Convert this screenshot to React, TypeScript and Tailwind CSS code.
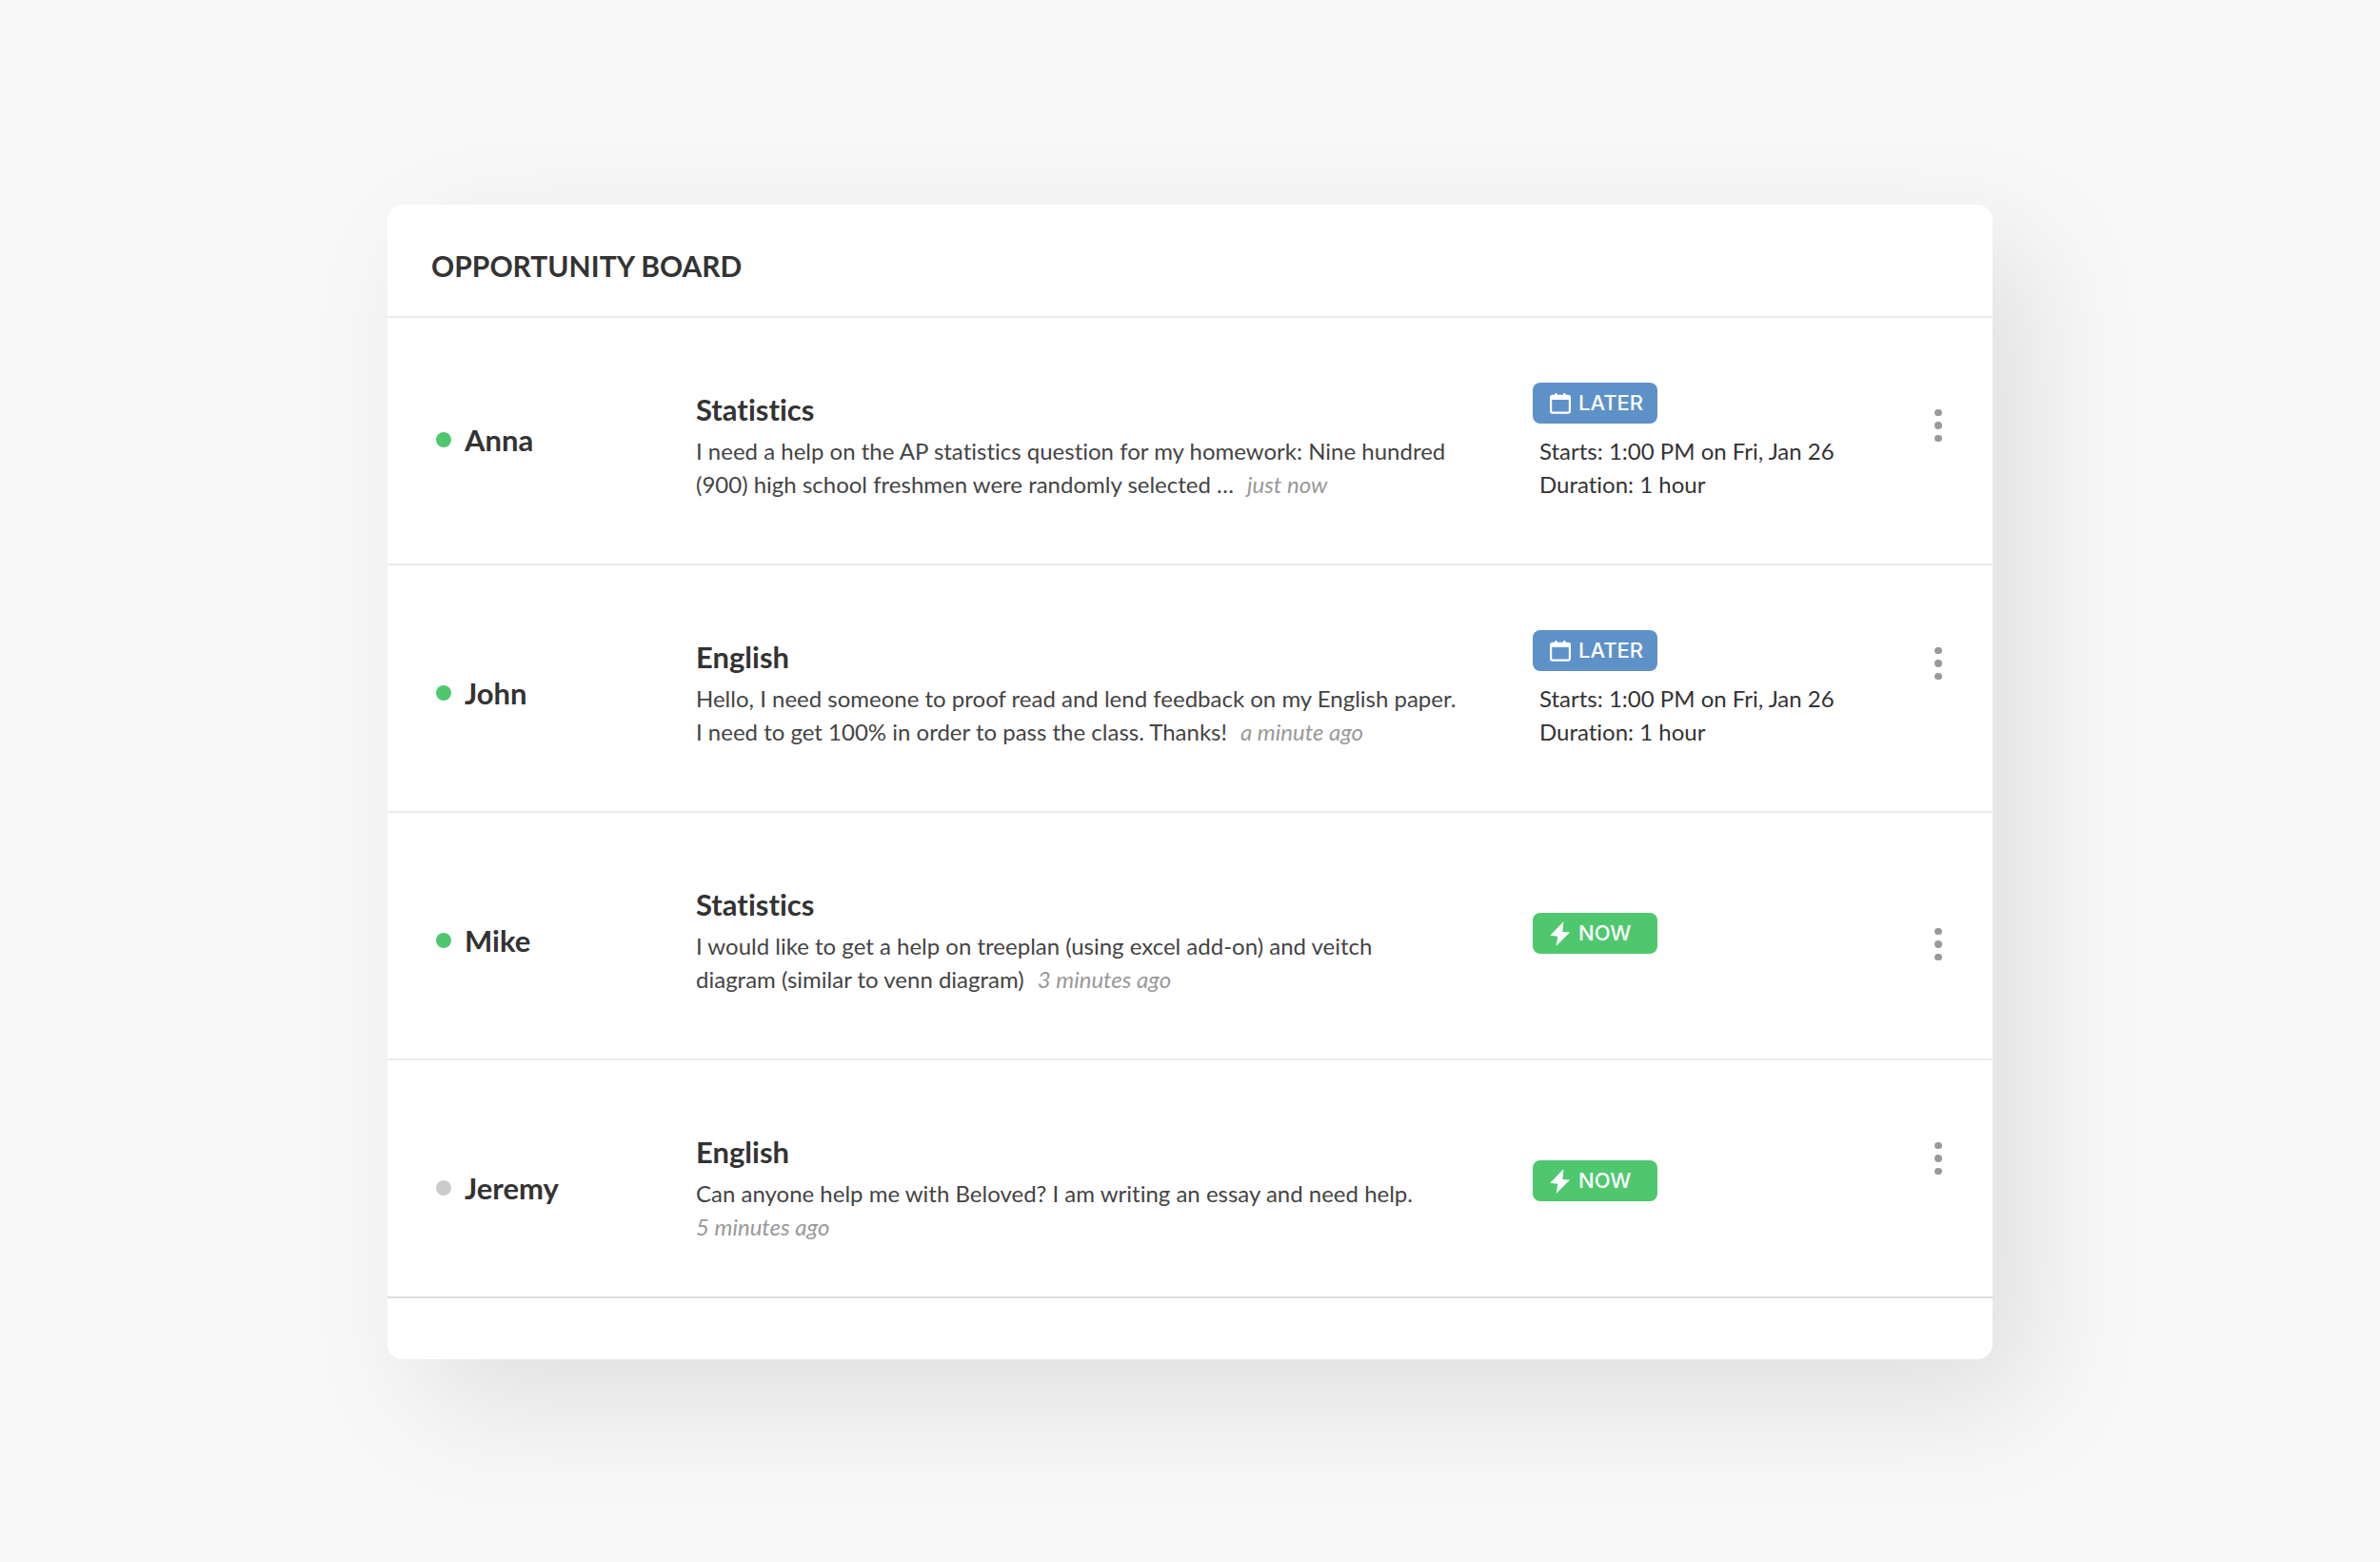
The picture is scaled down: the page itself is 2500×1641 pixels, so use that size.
import { useId } from 'react';
import clsx from 'clsx';

type Opportunity = {
  name: string;
  online: boolean;
  subject: string;
  message: string[];
  posted: string;
  session?: { starts: string; duration: string };
  nameClass: string;
  menuClass: string;
};

const opportunities: Opportunity[] = [
  {
    name: 'Anna',
    online: true,
    subject: 'Statistics',
    message: [
      'I need a help on the AP statistics question for my homework: Nine hundred',
      '(900) high school freshmen were randomly selected …',
    ],
    posted: 'just now',
    session: { starts: '1:00 PM on Fri, Jan 26', duration: '1 hour' },
    nameClass: 'pt-27',
    menuClass: 'pt-24',
  },
  {
    name: 'John',
    online: true,
    subject: 'English',
    message: [
      'Hello, I need someone to proof read and lend feedback on my English paper.',
      'I need to get 100% in order to pass the class. Thanks!',
    ],
    posted: 'a minute ago',
    session: { starts: '1:00 PM on Fri, Jan 26', duration: '1 hour' },
    nameClass: 'pt-[114px]',
    menuClass: 'pt-[86px]',
  },
  {
    name: 'Mike',
    online: true,
    subject: 'Statistics',
    message: [
      'I would like to get a help on treeplan (using excel add-on) and veitch',
      'diagram (similar to venn diagram)',
    ],
    posted: '3 minutes ago',
    nameClass: 'pt-[114px]',
    menuClass: 'pt-[121px]',
  },
  {
    name: 'Jeremy',
    online: false,
    subject: 'English',
    message: ['Can anyone help me with Beloved? I am writing an essay and need help.'],
    posted: '5 minutes ago',
    nameClass: 'pt-[114px]',
    menuClass: 'pt-[86px]',
  },
];

function CalendarIcon() {
  return (
    <svg width="22" height="22" viewBox="0 0 22 22" aria-hidden="true">
      <path
        d="M6.500 0c.8 0 1.300.500 1.300 1.300v.500h6.200v-.500C14 .5 14.500 0 15.300 0s1.300.5 1.300 1.300v.5h2.600A2.800 2.800 0 0 1 22 4.600v14.400a2.800 2.800 0 0 1-2.800 2.800H2.800A2.800 2.800 0 0 1 0 19V4.600a2.800 2.800 0 0 1 2.800-2.800h2.400v-.5C5.200.5 5.700 0 6.500 0zM2.200 7v11.600c0 .6.400 1 1 1h15.600c.6 0 1-.4 1-1V7z"
        fill="currentColor"
        fillRule="evenodd"
      />
    </svg>
  );
}

function BoltIcon() {
  return (
    <svg width="22" height="26" viewBox="0 0 22 26" aria-hidden="true">
      <path d="M14.500 0 .300 14.800l8 .9L6.600 26 21 11.600l-7.700-.700z" fill="currentColor" />
    </svg>
  );
}

function Badge({ later }: { later: boolean }) {
  return (
    <span
      className={clsx(
        'flex h-[43px] w-[131px] items-center gap-2 rounded-lg pl-[18px] font-[Inter,sans-serif] text-[22px] font-medium text-white',
        later ? 'bg-[#5e91c8]' : 'bg-[#4fc76e]'
      )}
    >
      {later ? <CalendarIcon /> : <BoltIcon />}
      {later ? 'LATER' : 'NOW'}
    </span>
  );
}

function Message({ lines, posted }: { lines: string[]; posted: string }) {
  // the timestamp trails the second line, or takes it when the message is short
  const [first, second] = lines;

  return (
    <div className="mt-[6px] text-[24px] leading-[35px] text-[#444]">
      <p>{first}</p>
      <div className="flex gap-[14px]">
        {second && <p>{second}</p>}
        <time className="whitespace-nowrap text-[#999] italic">{posted}</time>
      </div>
    </div>
  );
}

function OpportunityRow({ item }: { item: Opportunity }) {
  return (
    <li className="grid h-65 grid-cols-[273px_minmax(0,1fr)_409px_34px] border-b-2 border-[#ececec] pr-10 pl-[51px] last:h-[250px] last:border-[#dcdcdc]">
      <div className={clsx('flex h-fit items-center gap-[14px]', item.nameClass)}>
        <span
          className={clsx('size-4 rounded-full', item.online ? 'bg-[#4fc76e]' : 'bg-[#cbcbcb]')}
        />
        <h2 className="text-[31px] leading-10 font-bold">{item.name}</h2>
      </div>

      <div className="pt-19">
        <h3 className="text-[31px] leading-10 font-bold">{item.subject}</h3>
        <Message lines={item.message} posted={item.posted} />
      </div>

      <div className={item.session ? 'pt-17' : 'pt-[105px]'}>
        <Badge later={!!item.session} />
        {item.session && (
          <div className="mt-[11px] pl-[7px] text-[24px] leading-[35px]">
            <p>Starts: {item.session.starts}</p>
            <p>Duration: {item.session.duration}</p>
          </div>
        )}
      </div>

      <div className={item.menuClass}>
        <button
          className="flex size-[34px] cursor-pointer flex-col items-center justify-center gap-[6px]"
          aria-label={`Options for ${item.name}`}
        >
          <span className="size-2 rounded-full bg-[#999]" />
          <span className="size-2 rounded-full bg-[#999]" />
          <span className="size-2 rounded-full bg-[#999]" />
        </button>
      </div>
    </li>
  );
}

export default function App() {
  const titleId = useId();

  return (
    <main className="min-h-screen bg-[#f8f8f8] pt-[215px] pb-[213px] font-[Lato,sans-serif] text-[#333] [font-variant-ligatures:none]">
      <section
        aria-labelledby={titleId}
        className="mx-auto w-full max-w-[1686px] rounded-2xl bg-white pb-16 shadow-[40px_44px_130px_rgba(0,0,0,0.1)]"
      >
        <header className="border-b-2 border-[#ececec] px-[46px] pt-11 pb-[33px]">
          <h1 id={titleId} className="text-[30px] leading-10 font-bold">
            OPPORTUNITY BOARD
          </h1>
        </header>
        <ul>
          {opportunities.map(item => (
            <OpportunityRow key={item.name} item={item} />
          ))}
        </ul>
      </section>
    </main>
  );
}
